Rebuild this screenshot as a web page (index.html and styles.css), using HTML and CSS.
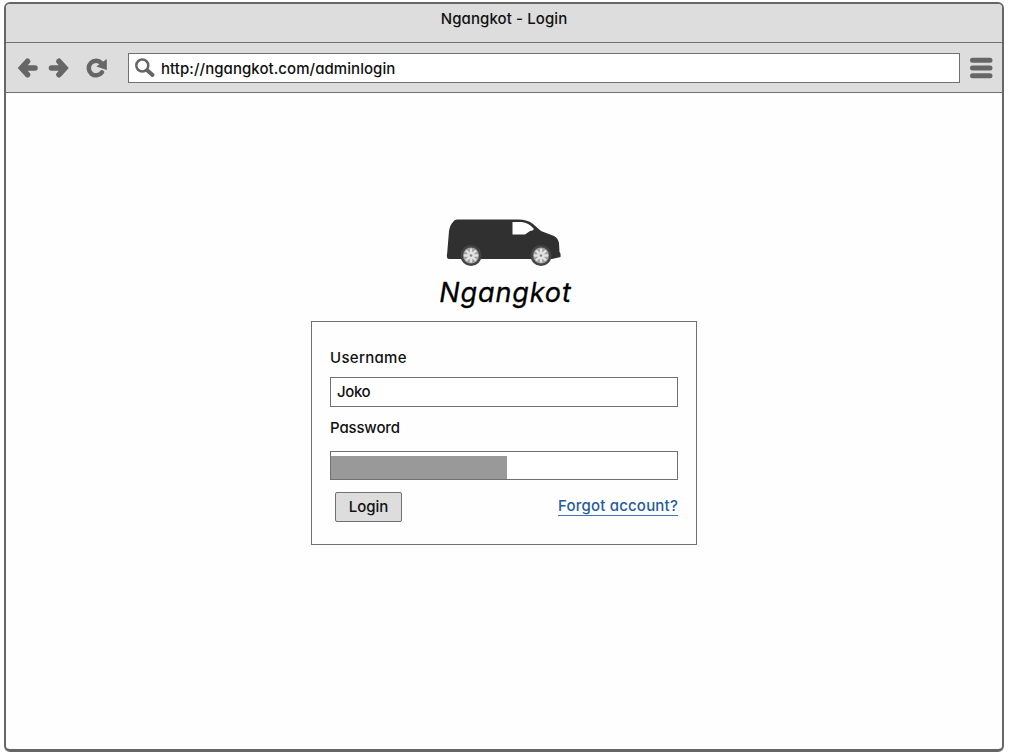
FILE: index.html
```html
<!DOCTYPE html>
<html lang="en">
<head>
<meta charset="utf-8">
<title>Ngangkot - Login</title>
<link rel="stylesheet" href="styles.css">
</head>
<body>
<div class="window">
  <header class="titlebar"><span class="title">Ngangkot - Login</span></header>
  <nav class="toolbar">
    <svg class="nav-icons" width="96" height="24" viewBox="0 0 96 24" fill="none" stroke="#666" stroke-width="5.600" stroke-linecap="round" stroke-linejoin="miter">
      <path d="M11.500 5.300 5.500 12 11.500 18.700M7 12h12"/>
      <path d="M43 5.300 49 12 43 18.700M47.500 12h-12"/>
      <path d="M86 16.300A7.300 7.300 0 1 1 85.500 7.200" stroke-width="4.500"/>
      <path d="M90.800 3v11l-10.500-3.500z" fill="#666" stroke="none"/>
    </svg>
    <div class="address">
      <svg class="search" width="22" height="22" viewBox="0 0 22 22" fill="none" stroke="#666">
        <circle cx="8.300" cy="8.500" r="6" stroke-width="2.500"/>
        <path d="M13.500 13.500l5 4.500" stroke-width="4" stroke-linecap="round"/>
      </svg>
      <span class="url">http://ngangkot.com/adminlogin</span>
    </div>
    <svg class="menu" width="23" height="22" viewBox="0 0 23 22" stroke="#666" stroke-width="5" stroke-linecap="round">
      <path d="M2.500 3.300h17.500M2.500 11h17.500M2.500 18.700h17.500"/>
    </svg>
  </nav>
  <main class="page">
    <svg class="van" width="118" height="52" viewBox="0 0 118 52">
      <path d="M7 5Q8 2.500 11 2.500H72Q82 2.500 87 7L95 14 108 19Q112 21 113 26L113.500 35Q115 36 114.500 40L106 42H3Q0 42 1.200 36L3 14Q4 8 7 5Z" fill="#303030"/>
      <path d="M66.500 5h9q8 1 12.500 7-1 2-4 2l-5 3.500H66.500z" fill="#fefefe"/>
      <g fill="#444"><circle cx="25" cy="38.500" r="10.500"/><circle cx="95" cy="38.500" r="10.500"/></g>
      <g fill="#a0a0a0"><circle cx="25" cy="38.500" r="8"/><circle cx="95" cy="38.500" r="8"/></g>
      <g stroke="#e2e2e2" stroke-width="2.400">
        <path d="M25 31.500v14M18 38.500h14M20 33.500l10 10M30 33.500l-10 10"/>
        <path d="M95 31.500v14M88 38.500h14M90 33.500l10 10M100 33.500l-10 10"/>
      </g>
      <g fill="#888"><circle cx="25" cy="38.500" r="1.300"/><circle cx="95" cy="38.500" r="1.300"/></g>
    </svg>
    <h1 class="brand">Ngangkot</h1>
    <form class="card">
      <div class="label username">Username</div>
      <div class="field"><span class="joko">Joko</span></div>
      <div class="label password">Password</div>
      <div class="field secret"><div class="mask"></div></div>
      <div class="actions">
        <button class="login" type="button">Login</button>
        <a class="forgot">Forgot account?</a>
      </div>
    </form>
  </main>
</div>
</body>
</html>
```
FILE: styles.css
```css
* { box-sizing: border-box; }
body {
  margin: 0;
  padding: 2px 0 0 4px;
  background: #fff;
  color: #111;
  font: 500 15px/20px Inter, "Liberation Sans", sans-serif;
  font-feature-settings: "cv11" 1, "calt" 0;
}
.window {
  width: 1000px;
  height: 750px;
  border: 2px solid #666;
  border-bottom-width: 3px;
  border-radius: 6px;
  overflow: hidden;
  background: #fefefe;
}
.titlebar {
  height: 39px;
  padding-top: 5px;
  text-align: center;
  background: #ddd;
  border-bottom: 1px solid #707070;
}
.title { letter-spacing: 0.1px; }
.url { white-space: nowrap; letter-spacing: 0.06px; padding-top: 2px; }
.toolbar {
  display: flex;
  align-items: center;
  height: 50px;
  padding-left: 10px;
  background: #ddd;
  border-bottom: 1px solid #707070;
}
.nav-icons { flex: none; margin-right: 16px; }
.address {
  display: flex;
  align-items: center;
  width: 832px;
  height: 30px;
  padding-left: 5px;
  background: #fff;
  border: 1px solid #707070;
}
.search { margin-right: 5px; }
.menu { margin-left: 10px; }
.page { display: flex; flex-direction: column; align-items: center; padding-top: 124px; }
.van { margin-left: 1px; }
.brand {
  margin: 4px 0 0 3px;
  height: 48px;
  font-size: 27px;
  line-height: 40px;
  font-weight: 400;
  font-style: italic;
  letter-spacing: 0.9px;
  color: #000;
  -webkit-text-stroke: 0.300px #000;
}
.card {
  width: 386px;
  height: 224px;
  padding: 26px 18px 0;
  border: 1px solid #707070;
  background: #fefefe;
}
.label { height: 20px; }
.username { letter-spacing: 0.3px; }
.password { letter-spacing: -0.15px; }
.joko { letter-spacing: -0.4px; }
.field {
  height: 30px;
  margin: 9px 0 11px;
  padding: 4px 6px;
  border: 1px solid #707070;
  background: #fff;
}
.secret { height: 29px; margin: 13px 0 12px; padding: 4px 0 0; }
.mask { width: 176px; height: 23px; background: #999; }
.actions { display: flex; justify-content: space-between; padding-left: 5px; }
.login {
  width: 67px;
  height: 30px;
  padding: 0;
  border: 1px solid #707070;
  border-radius: 2px;
  background: #ddd;
  color: #111;
  font: inherit;
  font-feature-settings: inherit;
}
.forgot {
  height: 24px;
  padding-top: 4px;
  color: #275b9b;
  line-height: 20px;
  letter-spacing: 0.2px;
  border-bottom: 1px solid #3b78b5;
}
```
